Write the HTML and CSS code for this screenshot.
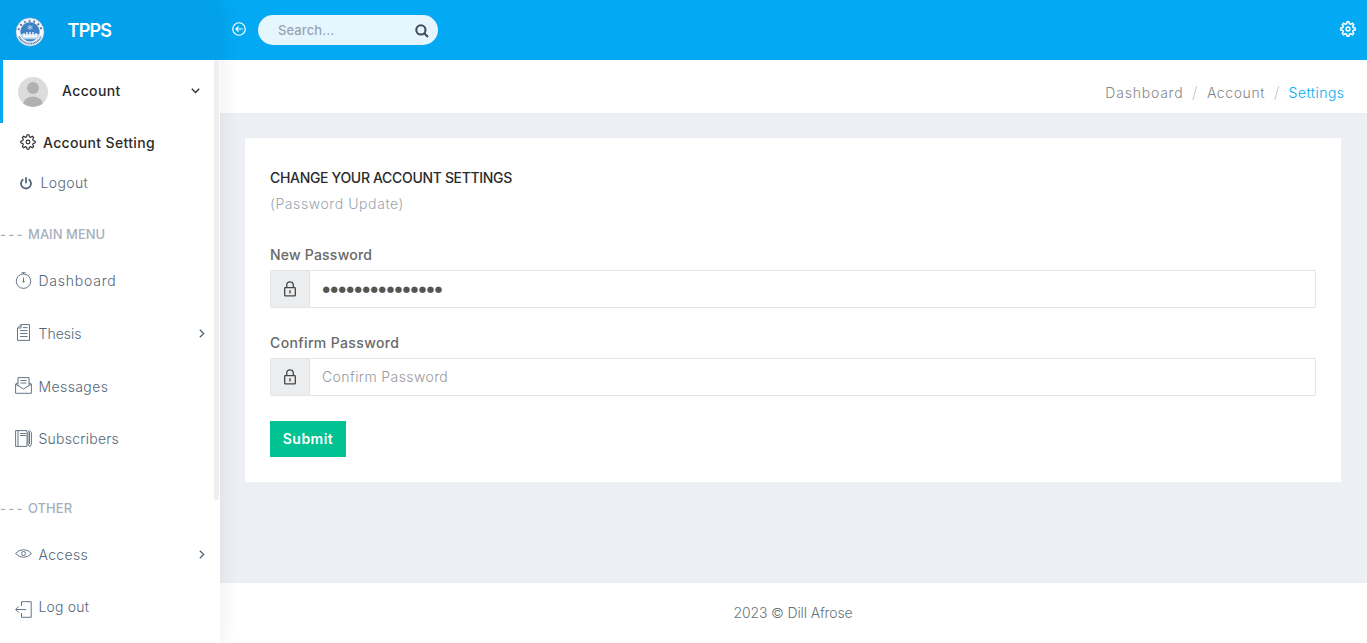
FILE: index.html
```html
<!DOCTYPE html>
<html lang="en">
<head>
<meta charset="utf-8">
<title>TPPS - Account Settings</title>
<link rel="stylesheet" href="styles.css">
</head>
<body>
<svg class="defs" width="0" height="0">
  <symbol id="gear" viewBox="0 0 16 16"><path d="M7.100.8h1.800l.5 2 1.200.5 1.800-1 1.300 1.300-1 1.800.5 1.200 2 .5v1.800l-2 .5-.5 1.200 1 1.800-1.300 1.300-1.800-1-1.200.5-.5 2H7.100l-.5-2-1.200-.5-1.800 1-1.300-1.300 1-1.800-.5-1.200-2-.5V7.100l2-.5.500-1.200-1-1.800 1.300-1.300 1.800 1 1.200-.5z"/><circle cx="8" cy="8" r="1.900"/></symbol>
  <symbol id="lock" viewBox="0 0 12 16"><rect x=".7" y="6.700" width="10.600" height="8.100" rx=".6"/><path d="M2.700 6.500V4.200C2.700 2.200 4 .9 6 .9s3.300 1.300 3.300 3.300v2.300M6 9.600v3M5.300 10h1.400"/></symbol>
</svg>
<div class="page">
  <aside class="sidebar">
    <div class="brand">
      <svg class="seal" viewBox="0 0 30 30"><circle cx="15" cy="15" r="14.200" fill="#f6f9fc" stroke="#5b8fc2" stroke-width=".6"/><path d="M3.500 13a11.800 11.800 0 0 1 23 0" fill="none" stroke="#4a78a9" stroke-width="2" stroke-dasharray="1.800 3"/><path d="M4 19.500a12 12 0 0 0 22 0" fill="none" stroke="#4f7caf" stroke-width="1.800" stroke-dasharray="1 .5"/><circle cx="15" cy="14.800" r="9.500" fill="#3f80c4" stroke="#5b8fc2" stroke-width=".5"/><path d="M6 17h18v1a9 9 0 0 1-3 4.200H9A9 9 0 0 1 6 18z" fill="#b9d7ee"/><path d="M9 19v-3m3 3v-4m3 4v-4m3 4v-4m3 4v-3M8 19.500h14" stroke="#fff" stroke-width="1.300"/><path d="M15 8v5M12.500 9.200l5 2.600M17.500 9.200l-5 2.600" fill="none" stroke="#b7daf5" stroke-width=".9"/></svg>
      <b class="brand-name">TPPS</b>
    </div>
    <div class="user">
      <svg class="avatar" viewBox="0 0 30 30"><clipPath id="round"><circle cx="15" cy="15" r="15"/></clipPath><g clip-path="url(#round)"><path fill="#dcdcdc" d="M0 0h30v30H0z"/><circle cx="15" cy="11" r="6" fill="#b1b1b1"/><ellipse cx="15" cy="29" rx="10.500" ry="9.500" fill="#b1b1b1"/></g></svg>
      <span class="user-name">Account</span>
      <svg class="down" viewBox="0 0 9 6"><path d="M.8.8l3.700 3.700L8.200.8"/></svg>
    </div>
    <a class="sub active"><svg class="sub-gear"><use href="#gear"/></svg><span class="t-setting">Account Setting</span></a>
    <a class="sub"><svg class="power" viewBox="0 0 12 13"><path d="M6 .3v6M3.300 2.300a5 5 0 1 0 5.400 0"/></svg><span class="t-logout">Logout</span></a>
    <h3 class="group"><span class="dash">---</span>MAIN MENU</h3>
    <nav class="menu">
      <a class="item"><svg class="icon i-dash" viewBox="0 0 17 17"><circle cx="8.500" cy="9.200" r="7.200"/><path d="M8.500 2V.8M6.500.7h4M13.500 3.500l1-1M8.500 5.500v4"/><circle cx="8.500" cy="9.500" r=".7"/></svg><span class="t-dash">Dashboard</span></a>
      <a class="item"><svg class="icon i-doc" viewBox="0 0 17 17"><path d="M6 .6h8.500v15.800h-12V4zM6 .6V4H2.500M8 3.600h4.500M5 6.600h7.500M5 9.500h7.500M5 12.500h7.500"/></svg><span class="t-thesis">Thesis</span><svg class="next" viewBox="0 0 6 9"><path d="M.8.8l3.900 3.700L.8 8.200"/></svg></a>
      <a class="item"><svg class="icon i-mail" viewBox="0 0 17 17"><path d="M3 5.500L.6 7.200v9.100h15.800V7.200L14 5.500M.6 7.200L8.500 12l7.900-4.800M3 8.500V.6h11v7.900M5.500 3.500h6M5.500 6h6"/></svg><span class="t-msg">Messages</span></a>
      <a class="item"><svg class="icon i-note" viewBox="0 0 17 17"><path d="M.6.6H12v15.800H.6zM3 .6v15.800M5 3.500h6M5 5.500h6M13 2.500L14.500.6 16.400 2.500V14l-1 2.300h-1L13 14zM14.500 2v12"/></svg><span class="t-subs">Subscribers</span></a>
    </nav>
    <h3 class="group other"><span class="dash">---</span>OTHER</h3>
    <nav class="menu">
      <a class="item"><svg class="icon i-eye" viewBox="0 0 17 17"><path d="M.5 8.500Q3.800 4.700 8.500 4.700t8 3.800q-3.300 3.800-8 3.800t-8-3.800z"/><circle cx="8.500" cy="8.500" r="2"/></svg><span class="t-access">Access</span><svg class="next" viewBox="0 0 6 9"><path d="M.8.8l3.900 3.700L.8 8.200"/></svg></a>
      <a class="item"><svg class="icon i-out" viewBox="0 0 17 17"><path d="M6.500 5V.7h9.700v15.600H6.500V12M11 8.500H.8M3.700 5.500l-3 3 3 3"/></svg><span class="t-out">Log out</span></a>
    </nav>
    <div class="scroll-thumb"></div>
  </aside>
  <div class="content">
    <header class="topbar">
      <svg class="back" viewBox="0 0 15 15"><circle cx="7.500" cy="7.500" r="6.700"/><path d="M11.500 7.500h-7M7 4.800L4.200 7.500 7 10.200"/></svg>
      <div class="search"><span class="t-search">Search...</span><svg viewBox="0 0 14 14"><circle cx="5.900" cy="5.900" r="4.600"/><path d="M9.300 9.300l3.700 3.700"/></svg></div>
      <svg class="top-gear"><use href="#gear"/></svg>
    </header>
    <div class="crumbs"><span class="c-dash">Dashboard</span><svg viewBox="0 0 24 16"><path d="M14 1L10 15"/></svg><span class="c-acc">Account</span><svg viewBox="0 0 24 16"><path d="M14 1L10 15"/></svg><span class="c-set">Settings</span></div>
    <main class="main">
      <section class="card">
        <h1><span class="t-title">CHANGE YOUR ACCOUNT SETTINGS</span></h1>
        <p><span class="t-update">(Password Update)</span></p>
        <label><span class="t-new">New Password</span></label>
        <div class="field"><div class="addon"><svg><use href="#lock"/></svg></div><div class="input dots">●●●●●●●●●●●●●●●</div></div>
        <label><span class="t-conf">Confirm Password</span></label>
        <div class="field"><div class="addon"><svg><use href="#lock"/></svg></div><div class="input"><span class="t-ph">Confirm Password</span></div></div>
        <button><span class="t-submit">Submit</span></button>
      </section>
    </main>
    <footer><span class="t-foot">2023 © Dill Afrose</span></footer>
  </div>
</div>
</body>
</html>
```
FILE: styles.css
```css
* { box-sizing: border-box; }
body { margin: 0; font: 300 14px/24px Inter, "Liberation Sans", sans-serif; color: #54667a; background: #fff; overflow: hidden; }
svg { display: block; flex: none; fill: none; stroke: currentColor; }
span, b { white-space: nowrap; }
.defs { position: absolute; }
.page { display: flex; width: 1366px; height: 643px; }
.sidebar { position: relative; z-index: 1; width: 220px; flex: none; background: #fff; box-shadow: 1px 0 20px rgba(0,0,0,.08); }
.brand { display: flex; align-items: center; height: 60px; padding: 3px 0 0 15px; background: #03a1ec; color: #fff; }
.seal { width: 30px; height: 30px; stroke: none; }
.brand-name { margin: -1px 0 0 22.5px; font-size: 18px; font-weight: 600; letter-spacing: -.75px; }
.user { display: flex; align-items: center; height: 63px; padding-left: 15px; border-left: 3px solid #03a9f3; color: #2b2b2b; }
.avatar { width: 30px; height: 30px; stroke: none; }
.user-name { width: 129px; margin: -1px 0 0 14px; font-weight: 500; letter-spacing: .38px; }
.down { width: 9px; height: 6px; margin-top: -2px; stroke-width: 1.3; }
.sub { display: flex; align-items: center; height: 40px; padding-left: 20px; }
.active { color: #2b2b2b; font-weight: 500; }
.sub-gear { width: 16px; height: 16px; margin: -2px 7px 0 0; stroke-width: 1.1; }
.power { width: 12px; height: 13px; margin-right: 8.5px; stroke-width: 1.8; }
.group { height: 52px; margin: 0; padding-top: 19px; font-size: 13px; font-weight: 500; letter-spacing: .02px; color: #a6afbb; white-space: pre; }
.dash { display: inline-block; width: 28px; letter-spacing: 2.3px; }
.other { height: 47px; margin-top: 16px; padding-top: 14px; }
.item { display: flex; align-items: center; height: 52.67px; padding: 0 15px; }
.icon { width: 17px; height: 17px; margin-right: 6.5px; margin-top: -2px; stroke-width: .9; }
.i-doc, .i-mail { margin-top: -3px; }
.i-out { margin-top: 3px; }
.next { width: 6px; height: 9px; margin-left: auto; stroke-width: 1.3; }
.scroll-thumb { position: absolute; top: 60px; right: 1px; width: 5px; height: 440px; border-radius: 4px; background: #efefef; }

/* Text tracking */
.t-dash, .c-dash { letter-spacing: .78px; }
.t-msg, .t-ph { letter-spacing: .4px; }
.t-subs { letter-spacing: .25px; }
.t-access, .t-setting { letter-spacing: .34px; }
.t-out { letter-spacing: .2px; margin-top: -1px; }
.t-logout, .t-conf { letter-spacing: .37px; }
.t-title { letter-spacing: -.33px; }
.t-update { letter-spacing: .58px; }
.t-new { letter-spacing: .22px; }
.t-submit { letter-spacing: .47px; }
.t-foot { letter-spacing: -.14px; }
.t-search { letter-spacing: .1px; }
.c-acc { letter-spacing: .6px; }

.content { flex: 1; min-width: 0; }
.topbar { display: flex; align-items: center; height: 60px; padding: 0 11px 0 12px; margin-right: -1px; background: #03a9f3; color: #fff; }
.back { width: 14px; height: 14px; margin: -2px 13px 0 0; stroke-width: 1.3; }
.search { display: flex; align-items: center; justify-content: space-between; width: 180px; height: 30px; padding: 0 9px 0 20px; margin-left: -1px; border-radius: 15px; background: #e6f6fe; color: #97a4b2; font-size: 13px; font-weight: 500; }
.search svg { width: 14px; height: 14px; margin-top: 1px; color: #414b5c; stroke-width: 2.1; }
.top-gear { width: 16px; height: 16px; margin: -3px 0 0 auto; stroke-width: 1.5; }
.crumbs { display: flex; align-items: center; justify-content: flex-end; height: 53px; padding: 13px 21.5px 0 0; color: #868686; }
.crumbs svg { width: 23.5px; height: 16px; color: #c4c4c4; }
.crumbs .c-set { color: #03a9f3; letter-spacing: .47px; }
.main { height: 470px; margin-right: -1px; padding: 25px 26px 0 25px; background: #ecf0f4; }
.card { height: 344px; padding: 28px 25px 0; background: #fff; }
h1 { margin: 0; font-size: 14px; line-height: 24px; font-weight: 500; color: #2b2b2b; }
p { margin: 2px 0 27px; color: #97a6b2; }
label { display: block; height: 27px; font-weight: 500; color: #686868; }
.field { display: flex; height: 38px; margin-bottom: 23px; border: 1px solid #e3e6e9; border-radius: 2px 0 0 2px; }
.addon { display: flex; align-items: center; justify-content: center; width: 39px; border-right: 1px solid #dfe4e8; background: #ecedef; color: #454545; }
.addon svg { width: 12px; height: 16px; stroke-width: 1.3; }
.input { display: flex; align-items: center; padding-left: 12px; color: #999; }
.dots { padding-left: 12.5px; color: #555; font: 8.500px/20px "DejaVu Sans", sans-serif; letter-spacing: .6px; }
button { display: block; width: 76px; height: 36px; margin-top: 25px; padding: 0 0 2px; border: 0; background: #00c292; color: #fff; font: 600 14px Inter, sans-serif; }
footer { display: flex; justify-content: center; height: 60px; padding-top: 18px; color: #67757c; }
```
